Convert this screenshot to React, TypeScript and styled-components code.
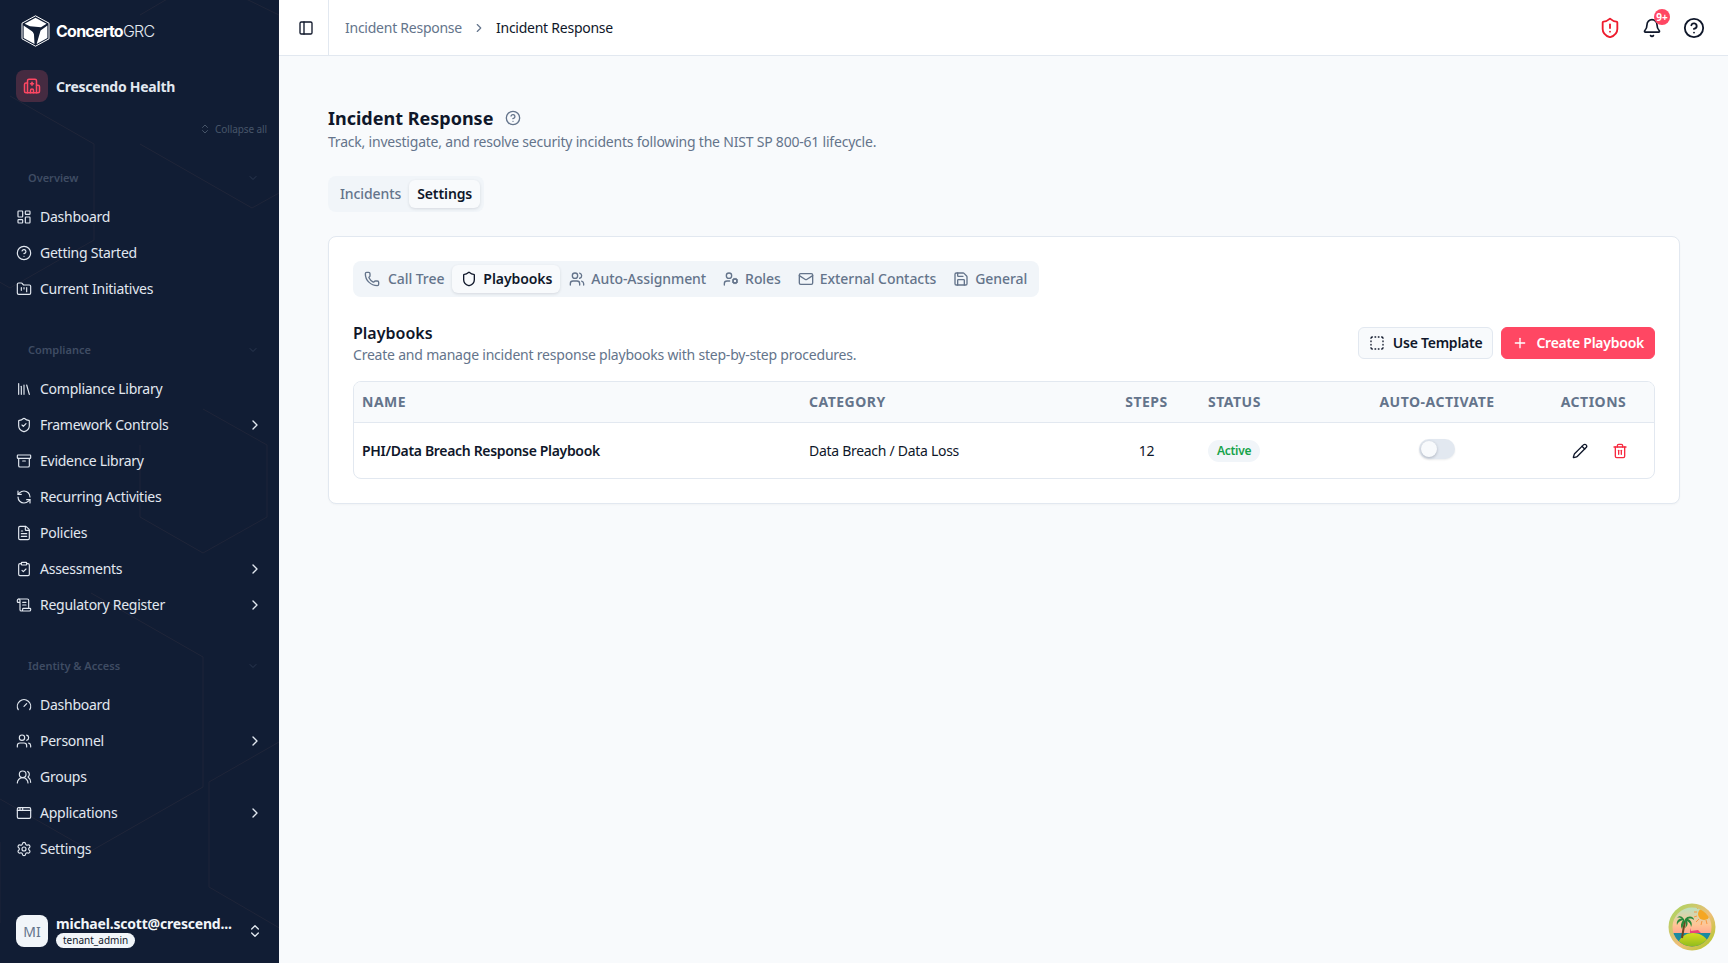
import React from "react";
import styled, { createGlobalStyle } from "styled-components";
import {
  AppWindow,
  Archive,
  Bell,
  ChevronDown,
  ChevronRight,
  ChevronsUpDown,
  CircleHelp,
  ClipboardCheck,
  FileText,
  FolderKanban,
  Gauge,
  Hospital,
  LayoutDashboard,
  Library,
  LucideIcon,
  Mail,
  PanelLeft,
  Pencil,
  Phone,
  Plus,
  RefreshCcw,
  Save,
  ScrollText,
  Settings,
  Shield,
  ShieldAlert,
  ShieldCheck,
  SquareDashed,
  Trash2,
  UserCog,
  Users,
  UsersRound,
} from "lucide-react";

const FONT = `"Noto Sans", "Open Sans", sans-serif`;
const ROSE = "#ff4763";
const SLATE = "#64748b";
const INK = "#0f172a";
const LINE = "#e2e8f0";

const GlobalStyle = createGlobalStyle`
  * { box-sizing: border-box; }
  html, body { margin: 0; height: 100%; background: #f8fafc; }
  body { font-family: ${FONT}; color: ${INK}; font-size: 14px; letter-spacing: -0.25px; }
  #root { height: 100%; }
`;

const Shell = styled.div`
  display: flex;
  height: 963px;
  overflow: hidden;
`;

/* sidebar */

const Sidebar = styled.aside`
  position: relative;
  flex: 0 0 279px;
  display: flex;
  flex-direction: column;
  background: #111d34;
  overflow: hidden;
`;

const Backdrop = styled.svg`
  position: absolute;
  inset: 0;
  width: 279px;
  height: 963px;
  pointer-events: none;
`;

const SideContent = styled.div`
  position: relative;
  flex: 1;
  display: flex;
  flex-direction: column;
`;

const Brand = styled.div`
  display: flex;
  align-items: center;
  gap: 6px;
  padding: 15px 0 0 21px;
`;

const BrandName = styled.div`
  font-family: Inter, sans-serif;
  font-size: 16px;
  letter-spacing: -0.75px;
  color: #fff;
  font-weight: 700;
  span {
    font-weight: 300;
    color: #e2e8f0;
  }
`;

const Tenant = styled.div`
  display: flex;
  align-items: center;
  gap: 8px;
  margin-top: 23px;
  padding-left: 16px;
`;

const TenantTile = styled.div`
  width: 32px;
  height: 32px;
  border-radius: 8px;
  background: #452b41;
  color: ${ROSE};
  display: flex;
  align-items: center;
  justify-content: center;
`;

const TenantName = styled.div`
  font-size: 14px;
  font-weight: 700;
  color: #e2e8f0;
`;

const CollapseAll = styled.div`
  display: flex;
  align-items: center;
  justify-content: flex-end;
  gap: 4px;
  height: 14px;
  margin-top: 20px;
  padding-right: 12px;
  font-size: 10px;
  letter-spacing: -0.1px;
  color: #475569;
`;

const GroupLabel = styled.div<{ $first?: boolean }>`
  display: flex;
  align-items: center;
  justify-content: space-between;
  height: 16px;
  margin-top: ${({ $first }) => ($first ? 34 : 35)}px;
  margin-bottom: 13px;
  padding: 0 20px 0 28px;
  font-size: 11px;
  font-weight: 600;
  letter-spacing: 0;
  color: #3f4c63;
`;

const Label = styled.span`
  padding-bottom: 2px;
`;

const NavRow = styled.div`
  display: flex;
  align-items: center;
  gap: 8px;
  height: 36px;
  padding: 0 16px;
  font-size: 14px;
  color: #e2e8f0;
  ${Label} {
    flex: 1;
  }
`;

const SideFooter = styled.div`
  margin-top: auto;
  display: flex;
  align-items: center;
  gap: 8px;
  padding: 0 16px 16px;
`;

const Avatar = styled.div`
  flex: 0 0 32px;
  height: 32px;
  border-radius: 8px;
  background: #f1f5f9;
  color: ${SLATE};
  font-size: 14px;
  letter-spacing: 0;
  display: flex;
  align-items: center;
  justify-content: center;
`;

const UserInfo = styled.div`
  flex: 1;
  min-width: 0;
  height: 32px;
`;

const UserMail = styled.div`
  font-size: 14px;
  line-height: 18px;
  font-weight: 700;
  letter-spacing: -0.2px;
  color: #f1f5f9;
  white-space: nowrap;
`;

const RoleTag = styled.div`
  width: fit-content;
  padding: 0 7px;
  height: 15px;
  line-height: 15px;
  border-radius: 8px;
  background: #f1f5f9;
  color: ${INK};
  font-size: 10px;
  letter-spacing: 0;
`;

/* top bar */

const Main = styled.main`
  flex: 1;
  min-width: 0;
  display: flex;
  flex-direction: column;
`;

const TopBar = styled.header`
  display: flex;
  align-items: center;
  height: 56px;
  background: #fff;
  border-bottom: 1px solid ${LINE};
`;

const PanelCell = styled.div`
  flex: 0 0 50px;
  height: 100%;
  display: flex;
  align-items: center;
  padding-left: 19px;
  border-right: 1px solid ${LINE};
`;

const Crumbs = styled.nav`
  display: flex;
  align-items: center;
  gap: 10px;
  margin-left: 16px;
  font-size: 14px;
  color: ${SLATE};
  b {
    font-weight: 400;
    color: ${INK};
  }
`;

const TopIcons = styled.div`
  margin-left: auto;
  display: flex;
  align-items: center;
  gap: 21px;
  padding-right: 23px;
`;

const BellWrap = styled.div`
  position: relative;
  display: flex;
`;

const BellBadge = styled.div`
  position: absolute;
  top: -9px;
  left: 12px;
  width: 16px;
  height: 16px;
  border-radius: 50%;
  background: ${ROSE};
  color: #fff;
  font-size: 10px;
  font-weight: 700;
  letter-spacing: 0;
  line-height: 16px;
  text-align: center;
`;

/* page */

const Page = styled.div`
  flex: 1;
  padding: 48px 48px 0 49px;
`;

const TitleRow = styled.div`
  display: flex;
  align-items: center;
  gap: 12px;
  height: 28px;
`;

const Title = styled.h1`
  margin: 0;
  font-size: 18px;
  font-weight: 700;
  line-height: 28px;
  letter-spacing: 0;
  color: ${INK};
`;

const Subtitle = styled.p`
  margin: 0;
  line-height: 20px;
  font-size: 14px;
  letter-spacing: -0.21px;
  color: ${SLATE};
`;

const TabList = styled.div`
  display: inline-flex;
  align-items: center;
  height: 36px;
  padding: 0 4px;
  border-radius: 8px;
  background: #f1f5f9;
`;

const PageTabs = styled(TabList)`
  margin: 24px 0;
  vertical-align: top;
`;

const Tab = styled.div<{ $active?: boolean }>`
  display: flex;
  align-items: center;
  height: 28px;
  padding: 0 8px;
  border-radius: 6px;
  font-size: 14px;
  letter-spacing: -0.1px;
  font-weight: ${({ $active }) => ($active ? 600 : 500)};
  color: ${({ $active }) => ($active ? INK : SLATE)};
  background: ${({ $active }) => ($active ? "#f8fafc" : "transparent")};
  box-shadow: ${({ $active }) =>
    $active ? "0 1px 3px rgba(15, 23, 42, 0.12)" : "none"};
`;

const IconTab = styled(Tab)`
  gap: 6px;
  padding: 0 8px 0 9px;
  letter-spacing: -0.07px;
  &:first-child {
    gap: 8px;
    padding-left: 7px;
  }
`;

const Card = styled.section`
  padding: 24px;
  background: #fff;
  border: 1px solid ${LINE};
  border-radius: 8px;
  box-shadow: 0 1px 2px rgba(15, 23, 42, 0.03);
`;

const SectionHead = styled.div`
  display: flex;
  align-items: center;
  justify-content: space-between;
  margin: 24px 0 16px;
`;

const SectionTitle = styled.h2`
  margin: 0;
  font-size: 16px;
  line-height: 24px;
  font-weight: 600;
  letter-spacing: 0;
`;

const Buttons = styled.div`
  display: flex;
  gap: 8px;
`;

const Button = styled.button<{ $primary?: boolean }>`
  display: flex;
  align-items: center;
  gap: 8px;
  height: 32px;
  padding: 0 10px;
  border-radius: 6px;
  font-family: ${FONT};
  font-size: 14px;
  font-weight: 600;
  letter-spacing: -0.25px;
  border: 1px solid ${({ $primary }) => ($primary ? ROSE : LINE)};
  color: ${({ $primary }) => ($primary ? "#fff" : INK)};
  background: ${({ $primary }) => ($primary ? ROSE : "#f8fafc")};
`;

const TableWrap = styled.div`
  border: 1px solid ${LINE};
  border-radius: 8px;
  overflow: hidden;
`;

const Table = styled.table`
  width: 100%;
  table-layout: fixed;
  border-collapse: collapse;
`;

const Th = styled.th<{ $center?: boolean }>`
  height: 40px;
  padding: 0 8px;
  background: #f8fafc;
  border-bottom: 1px solid ${LINE};
  color: ${SLATE};
  font-size: 14px;
  font-weight: 700;
  letter-spacing: 0.5px;
  text-transform: uppercase;
  text-align: ${({ $center }) => ($center ? "center" : "left")};
`;

const Td = styled.td<{ $center?: boolean; $strong?: boolean }>`
  height: 56px;
  padding: 0 8px;
  font-size: 14px;
  color: ${INK};
  font-weight: ${({ $strong }) => ($strong ? 600 : 400)};
  letter-spacing: ${({ $strong }) => ($strong ? -0.33 : -0.29)}px;
  text-align: ${({ $center }) => ($center ? "center" : "left")};
`;

const Badge = styled.span`
  display: inline-block;
  margin-top: 2px;
  padding: 0 9px;
  height: 22px;
  line-height: 22px;
  vertical-align: middle;
  border-radius: 11px;
  background: #f1f5f9;
  color: #16a34a;
  font-size: 12px;
  font-weight: 600;
`;

const Toggle = styled.div`
  position: relative;
  display: inline-block;
  width: 36px;
  height: 20px;
  top: -2px;
  vertical-align: middle;
  border-radius: 10px;
  background: ${LINE};
  box-shadow: 0 1px 2px rgba(15, 23, 42, 0.08);
`;

const Knob = styled.div`
  position: absolute;
  top: 2px;
  left: 2px;
  width: 16px;
  height: 16px;
  border-radius: 50%;
  background: #f8fafc;
  box-shadow: 0 1px 3px rgba(15, 23, 42, 0.25);
`;

const ActionCell = styled.div`
  display: flex;
  justify-content: center;
  gap: 24px;
  margin-left: 12px;
  padding-top: 2px;
`;

const Helper = styled.div`
  position: absolute;
  right: 12px;
  bottom: 12px;
  width: 48px;
  height: 48px;
`;

type NavItem = { label: string; icon: LucideIcon; more?: boolean };

const GROUPS: { title: string; items: NavItem[] }[] = [
  {
    title: "Overview",
    items: [
      { label: "Dashboard", icon: LayoutDashboard },
      { label: "Getting Started", icon: CircleHelp },
      { label: "Current Initiatives", icon: FolderKanban },
    ],
  },
  {
    title: "Compliance",
    items: [
      { label: "Compliance Library", icon: Library },
      { label: "Framework Controls", icon: ShieldCheck, more: true },
      { label: "Evidence Library", icon: Archive },
      { label: "Recurring Activities", icon: RefreshCcw },
      { label: "Policies", icon: FileText },
      { label: "Assessments", icon: ClipboardCheck, more: true },
      { label: "Regulatory Register", icon: ScrollText, more: true },
    ],
  },
  {
    title: "Identity & Access",
    items: [
      { label: "Dashboard", icon: Gauge },
      { label: "Personnel", icon: Users, more: true },
      { label: "Groups", icon: UsersRound },
      { label: "Applications", icon: AppWindow, more: true },
      { label: "Settings", icon: Settings },
    ],
  },
];

const SETTINGS_TABS: { label: string; icon: LucideIcon; active?: boolean }[] = [
  { label: "Call Tree", icon: Phone },
  { label: "Playbooks", icon: Shield, active: true },
  { label: "Auto-Assignment", icon: Users },
  { label: "Roles", icon: UserCog },
  { label: "External Contacts", icon: Mail },
  { label: "General", icon: Save },
];

const HEXES = [
  "140,15 203,-22 279,15 279,193 252,208 140,144",
  "10,96 94,144 94,240 10,288 -74,240 -74,144",
  "203,409 267,445 267,517 203,553 140,517 140,445",
  "91,593 203,657 203,787 91,851 -21,787 -21,657",
  "300,730 209,782 209,887 300,940",
  "0,842 0,923",
];

const Logo = () => (
  <svg width="29" height="32" viewBox="0 0 29 32">
    <polygon
      points="14.5,0.8 28,8.2 28,23.8 14.5,31.2 1,23.8 1,8.2"
      fill="none"
      stroke="#fff"
      strokeWidth="1"
    />
    <polygon points="14.5,2.8 25.5,8.8 20,12.2 9,11.2 3.6,8.8" fill="#fff" />
    <polygon points="2.6,10.6 12.8,17.4 13.6,29 2.6,23" fill="#fff" />
    <polygon points="26.4,10.6 26.4,23 15.6,29 19.6,15.4" fill="#fff" />
    <polygon points="9.6,13 18.2,13.8 14.4,21.6" fill="#111d34" />
    <path d="M14.4 21.6v7.4" stroke="#111d34" strokeWidth="1" />
  </svg>
);

const IslandBadge = () => (
  <svg width="48" height="48" viewBox="0 0 48 48">
    <defs>
      <linearGradient id="ring" x1="0" y1="0" x2="1" y2="1">
        <stop offset="0" stopColor="#9fd85c" />
        <stop offset="0.55" stopColor="#f0bd78" />
        <stop offset="1" stopColor="#a4cc1c" />
      </linearGradient>
      <linearGradient id="sky" x1="0" y1="0" x2="0" y2="1">
        <stop offset="0" stopColor="#a7e8c8" />
        <stop offset="0.45" stopColor="#ffc596" />
        <stop offset="0.7" stopColor="#ff9d8c" />
      </linearGradient>
      <linearGradient id="hill" x1="0" y1="0" x2="0" y2="1">
        <stop offset="0" stopColor="#dcdc1e" />
        <stop offset="1" stopColor="#86b81e" />
      </linearGradient>
      <clipPath id="disc">
        <circle cx="24" cy="24" r="19.5" />
      </clipPath>
    </defs>
    <circle cx="24" cy="24" r="23.5" fill="url(#ring)" />
    <g clipPath="url(#disc)">
      <rect width="48" height="48" fill="url(#sky)" />
      <circle cx="36" cy="11" r="6" fill="#f5a623" />
      <path
        d="M28 3l2 3M26 9h3M26 14l3-1M28 19l3-3M33 22l1-4M39 21l-1-4"
        stroke="#f9963f"
        strokeWidth="1"
      />
      <rect x="4" y="30" width="40" height="15" fill="#1b8aa0" />
      <path d="M22 25l1 3 7-1 3 3H22z" fill="#e8457a" />
      <path d="M9 45c1-10 8-15 16-15s16 5 17 15z" fill="url(#hill)" />
    </g>
    <path d="M14 35c1-7 2-12 3-17" stroke="#6e4522" strokeWidth="2" fill="none" />
    <path
      d="M17 18c-2-5-6-6-8-3 2-1 4 0 5 1-3-1-6 2-5 6 1-3 3-4 6-5-2 3-3 6-1 9 1-3 2-6 3-8 1 2 1 5 0 7 3-2 3-5 2-7 2 1 4 3 4 6 2-3 0-7-3-8 2-1 5 0 6 1 0-4-6-5-9-1z"
      fill="#27883a"
    />
  </svg>
);

const App: React.FC = () => (
  <Shell>
    <GlobalStyle />
    <Sidebar>
      <Backdrop viewBox="0 0 279 963">
        {HEXES.map((points) => (
          <polyline
            key={points}
            points={points}
            fill="none"
            stroke="#1f2539"
            strokeWidth="1"
          />
        ))}
      </Backdrop>
      <SideContent>
        <Brand>
          <Logo />
          <BrandName>
            Concerto<span>GRC</span>
          </BrandName>
        </Brand>
        <Tenant>
          <TenantTile>
            <Hospital size={18} />
          </TenantTile>
          <TenantName>Crescendo Health</TenantName>
        </Tenant>
        <CollapseAll>
          <ChevronsUpDown size={12} />
          Collapse all
        </CollapseAll>
        {GROUPS.map((group, index) => (
          <React.Fragment key={group.title}>
            <GroupLabel $first={index === 0}>
              <Label>{group.title}</Label>
              <ChevronDown size={12} color="#2b3850" />
            </GroupLabel>
            {group.items.map((item) => (
              <NavRow key={item.label + group.title}>
                <item.icon size={16} strokeWidth={1.75} />
                <Label>{item.label}</Label>
                {item.more && <ChevronRight size={16} />}
              </NavRow>
            ))}
          </React.Fragment>
        ))}
        <SideFooter>
          <Avatar>MI</Avatar>
          <UserInfo>
            <UserMail>michael.scott@crescend...</UserMail>
            <RoleTag>tenant_admin</RoleTag>
          </UserInfo>
          <ChevronsUpDown size={16} color="#e2e8f0" />
        </SideFooter>
      </SideContent>
    </Sidebar>
    <Main>
      <TopBar>
        <PanelCell>
          <PanelLeft size={16} color={INK} />
        </PanelCell>
        <Crumbs>
          Incident Response
          <ChevronRight size={14} />
          <b>Incident Response</b>
        </Crumbs>
        <TopIcons>
          <ShieldAlert size={22} color="#ee1c2e" />
          <BellWrap>
            <Bell size={20} color={INK} />
            <BellBadge>9+</BellBadge>
          </BellWrap>
          <CircleHelp size={22} color={INK} />
        </TopIcons>
      </TopBar>
      <Page>
        <TitleRow>
          <Title>Incident Response</Title>
          <CircleHelp size={16} color={SLATE} />
        </TitleRow>
        <Subtitle>
          Track, investigate, and resolve security incidents following the NIST
          SP 800-61 lifecycle.
        </Subtitle>
        <PageTabs>
          <Tab>
            <Label>Incidents</Label>
          </Tab>
          <Tab $active>
            <Label>Settings</Label>
          </Tab>
        </PageTabs>
        <Card>
          <TabList>
            {SETTINGS_TABS.map((tab) => (
              <IconTab key={tab.label} $active={tab.active}>
                <tab.icon size={16} color={tab.active ? INK : SLATE} />
                <Label>{tab.label}</Label>
              </IconTab>
            ))}
          </TabList>
          <SectionHead>
            <div>
              <SectionTitle>Playbooks</SectionTitle>
              <Subtitle>
                Create and manage incident response playbooks with step-by-step
                procedures.
              </Subtitle>
            </div>
            <Buttons>
              <Button>
                <SquareDashed size={16} />
                <Label>Use Template</Label>
              </Button>
              <Button $primary>
                <Plus size={16} />
                <Label>Create Playbook</Label>
              </Button>
            </Buttons>
          </SectionHead>
          <TableWrap>
            <Table>
              <colgroup>
                <col style={{ width: 447 }} />
                <col style={{ width: 292 }} />
                <col style={{ width: 107 }} />
                <col style={{ width: 141 }} />
                <col style={{ width: 192 }} />
                <col />
              </colgroup>
              <thead>
                <tr>
                  <Th>Name</Th>
                  <Th>Category</Th>
                  <Th $center>Steps</Th>
                  <Th>Status</Th>
                  <Th $center>Auto-Activate</Th>
                  <Th $center>Actions</Th>
                </tr>
              </thead>
              <tbody>
                <tr>
                  <Td $strong>PHI/Data Breach Response Playbook</Td>
                  <Td>Data Breach / Data Loss</Td>
                  <Td $center>12</Td>
                  <Td>
                    <Badge>Active</Badge>
                  </Td>
                  <Td $center>
                    <Toggle>
                      <Knob />
                    </Toggle>
                  </Td>
                  <Td $center>
                    <ActionCell>
                      <Pencil size={16} color={INK} />
                      <Trash2 size={16} color="#f6293f" />
                    </ActionCell>
                  </Td>
                </tr>
              </tbody>
            </Table>
          </TableWrap>
        </Card>
      </Page>
    </Main>
    <Helper>
      <IslandBadge />
    </Helper>
  </Shell>
);

export default App;
